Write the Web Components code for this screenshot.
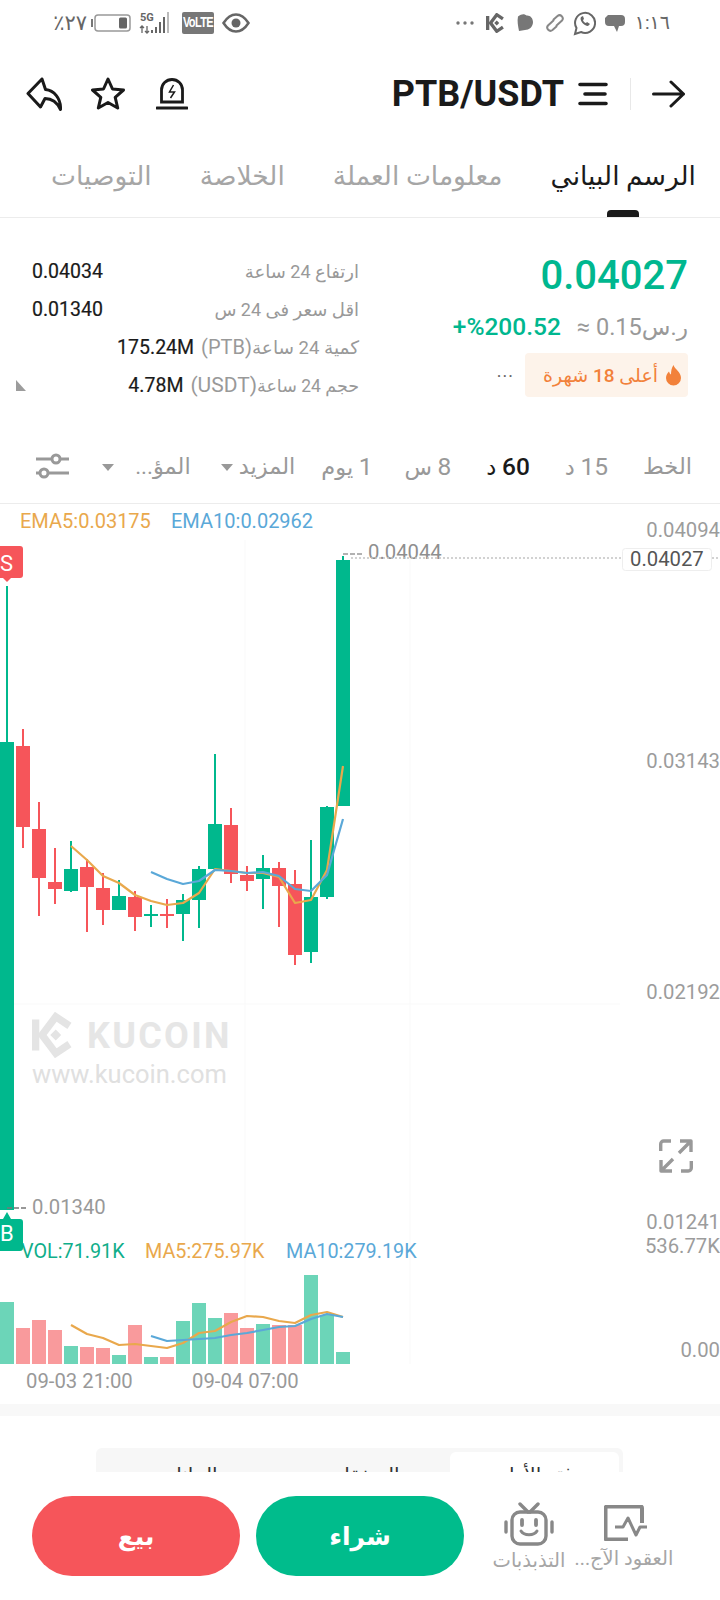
<!DOCTYPE html>
<html lang="ar">
<head>
<meta charset="utf-8">
<title>PTB/USDT</title>
<style>
    html, body { margin: 0; padding: 0; background: #fff; }
    body { width: 720px; height: 1600px; overflow: hidden; font-family: Roboto, "DejaVu Sans", sans-serif; color: #1a1a1a; }
</style>
</head>
<body>
<status-bar></status-bar>
<pair-header pair="PTB/USDT"></pair-header>
<tab-bar></tab-bar>
<ticker-panel></ticker-panel>
<interval-bar></interval-bar>
<kline-chart></kline-chart>
<order-peek></order-peek>
<trade-bar></trade-bar>

<script>
// logo kucoin, dùng cho status bar và watermark
const kcLogo = (color) => `
    <path d="M4 6V40" stroke="${color}" stroke-width="8" fill="none"/>
    <path d="M41 13L26 3 11 23 26 43 41 33" stroke="${color}" stroke-width="8" fill="none"/>
    <path d="M26 17l6 6-6 6-6-6z" fill="${color}"/>`;

class StatusBar extends HTMLElement {
    constructor() {
        super();
        this.attachShadow({ mode: 'open' });
        this.shadowRoot.innerHTML = `
        <style>
            :host { display: flex; justify-content: space-between; align-items: center; height: 45px; padding: 0 50px 0 46px; color: #666; box-sizing: border-box; }
            .side { display: flex; align-items: center; }
            .txt { font-size: 19px; letter-spacing: 1px; }
            svg { display: block; }
            .volte { margin-left: 11px; background: #777; color: #fff; border-radius: 2px; width: 32px; height: 22px; display: flex; align-items: center; justify-content: center; overflow: hidden; }
            .volte span { font: 700 11px/1 'Liberation Sans', sans-serif; letter-spacing: -.6px; transform: scaleY(1.350); }
        </style>
        <div class="side">
            <span class="txt" dir="rtl" style="font-size:21px;width:41px;letter-spacing:2px">٢٧٪</span>
            <svg width="40" height="18" viewBox="0 0 40 18" style="margin-left:4px">
                <rect x="0" y="5" width="2" height="8" fill="#777"/>
                <rect x="4" y="1" width="35" height="16" rx="3" fill="none" stroke="#999" stroke-width="1.5"/>
                <rect x="28" y="3.500" width="8" height="11" rx="1.500" fill="#666"/>
            </svg>
            <svg width="32" height="24" viewBox="0 0 32 24" style="margin-left:8px">
                <text x="1" y="10" font-family="Roboto" font-size="11" font-weight="700" fill="#666">5G</text>
                <path d="M3 22v-7M1 17l2-2 2 2M8 15v7M6 20l2 2 2-2" stroke="#666" stroke-width="1.300" fill="none"/>
                <rect x="12" y="19" width="2" height="3" fill="#666"/>
                <rect x="16" y="16" width="2" height="6" fill="#666"/>
                <rect x="20" y="11" width="2" height="11" fill="#666"/>
                <rect x="24" y="6" width="2" height="16" fill="#666"/>
                <rect x="28" y="1" width="2" height="21" fill="#bbb"/>
            </svg>
            <div class="volte"><span>VoLTE</span></div>
            <svg width="28" height="20" viewBox="0 0 28 20" style="margin-left:8px">
                <path d="M1.500 10C6 3 10 1.500 14 1.500S22 3 26.500 10C22 17 18 18.500 14 18.500S6 17 1.500 10Z" fill="none" stroke="#666" stroke-width="2.500"/>
                <circle cx="14" cy="10" r="4.500" fill="#666"/>
            </svg>
        </div>
        <div class="side">
            <svg width="18" height="4" viewBox="0 0 18 4"><circle cx="2" cy="2" r="1.700" fill="#777"/><circle cx="9" cy="2" r="1.700" fill="#777"/><circle cx="16" cy="2" r="1.700" fill="#777"/></svg>
            <svg width="19" height="20" viewBox="0 0 46 46" style="margin-left:12px">${kcLogo('#666')}</svg>
            <svg width="17" height="19" viewBox="0 0 17 19" style="margin-left:12px"><path d="M1 3.500C5 0 8 1 9.500 2.500 13 2 16 5 16 9c0 5-4 8-8 8l-6 1C1 13 0 8 1 3.500Z" fill="#777"/></svg>
            <svg width="20" height="18" viewBox="0 0 20 18" style="margin-left:11px" fill="none" stroke="#888" stroke-width="2"><path d="M9 6L3 11.500a3.200 3.200 0 0 0 4.500 4.500l4.500-4"/><path d="M11 12l6-5.500A3.200 3.200 0 0 0 12.500 2L8 6"/></svg>
            <svg width="23" height="26" viewBox="0 0 23 26" style="margin-left:8px" fill="none"><path d="M2 24l1.500-6A10 10 0 1 1 8 22Z" stroke="#666" stroke-width="2"/><path d="M8 7c-2 3 3 9 7 9l2-2-3-2-1 1c-1 0-3-2-3-3l1-1-1-3Z" fill="#666"/></svg>
            <svg width="21" height="20" viewBox="0 0 21 20" style="margin-left:8px"><path d="M4 2h13a4 4 0 0 1 4 4v3a4 4 0 0 1-4 4h-2l-2 6-3-6H5a4 4 0 0 1-4-4V5Z" fill="#777"/></svg>
            <span class="txt" style="margin-left:10px" dir="ltr">١:١٦</span>
        </div>`;
    }
}

class PairHeader extends HTMLElement {
    constructor() {
        super();
        this.attachShadow({ mode: 'open' });
        this.shadowRoot.innerHTML = `
        <style>
            :host { display: flex; align-items: center; height: 76px; padding: 21px 35px 0 26px; box-sizing: border-box; }
            svg { display: block; flex: none; }
            .title { font: 700 36px/1 Roboto, sans-serif; color: #1a1a1a; margin-left: auto; }
            .sep { width: 1px; height: 32px; background: #e8e8e8; margin: 0 21px 0 22px; }
        </style>
        <svg width="36" height="34" viewBox="0 0 36 34" fill="none" stroke="#1a1a1a" stroke-width="3" stroke-linejoin="round"><path d="M16 2L2 16.500 14.500 30 19 21.500C25 21.500 31 25 34.500 32.500 35 21 28 13.500 19.500 12.500Z"/></svg>
        <svg width="34" height="33" viewBox="0 0 34 33" fill="none" stroke="#1a1a1a" stroke-width="3" stroke-linejoin="round" style="margin-left:29px"><path d="M17 2l4.500 10 11 1-8.300 7.300 2.500 10.700L17 25.500 7.300 31l2.500-10.700L1.500 13l11-1Z"/></svg>
        <svg width="32" height="33" viewBox="0 0 32 33" fill="none" stroke="#1a1a1a" style="margin-left:31px"><path d="M5.500 25V13a10.500 10.500 0 0 1 21 0V25Z" stroke-width="2.800"/><path d="M17.500 8l-4 7h5l-4 6" stroke-width="1.500"/><path d="M1 31h30" stroke-width="3.200" stroke-linecap="round"/></svg>
        <span class="title">${this.getAttribute('pair')}</span>
        <svg width="30" height="24" viewBox="0 0 30 24" fill="none" stroke="#1a1a1a" stroke-width="3.600" stroke-linecap="round" style="margin-left:14px"><path d="M2 2.500h26M7 12h20M2 21.500h26"/></svg>
        <span class="sep"></span>
        <svg width="33" height="28" viewBox="0 0 33 28" fill="none" stroke="#1a1a1a" stroke-width="3" stroke-linecap="round" stroke-linejoin="round"><path d="M1.500 14h30M19 2l12.500 12L19 26"/></svg>`;
    }
}

class TabBar extends HTMLElement {
    constructor() {
        super();
        this.attachShadow({ mode: 'open' });
        this.shadowRoot.innerHTML = `
        <style>
            :host { display: flex; gap: 48px; height: 97px; padding: 0 24px 0 0; box-sizing: border-box; border-bottom: 1px solid #ececec; font-size: 26.500px; color: #a6a6a6; }
            .tab { position: relative; height: 96px; line-height: 110px; white-space: nowrap; }
            .tab.on { color: #1a1a1a; }
            .tab.on::after { content: ''; position: absolute; left: 56px; bottom: 0; width: 32px; height: 7px; border-radius: 4px 4px 0 0; background: #1a1a1a; }
        </style>`;
        this.setAttribute('dir', 'rtl');
        ['الرسم البياني', 'معلومات العملة', 'الخلاصة', 'التوصيات'].forEach((name, i) => {
            const tab = document.createElement('span');
            tab.className = i === 0 ? 'tab on' : 'tab';
            tab.textContent = name;
            this.shadowRoot.appendChild(tab);
        });
    }
}

class TickerPanel extends HTMLElement {
    constructor() {
        super();
        this.attachShadow({ mode: 'open' });
        this.shadowRoot.innerHTML = `
        <style>
            :host { display: flex; position: relative; justify-content: space-between; height: 215px; padding: 34px 32px 0 32px; box-sizing: border-box; }
            .stats { width: 327px; display: flex; flex-direction: column; gap: 0; }
            .row { display: flex; height: 38px; align-items: center; font-size: 18px; color: #999; }
            .row b { font: 400 19.500px Roboto, sans-serif; color: #1a1a1a; -webkit-text-stroke: .2px #1a1a1a; }
            .row .lbl { margin-left: auto; white-space: nowrap; }
            .row.near b { margin-left: auto; margin-right: 7px; }
            .row.near .lbl { margin-left: 0; font-size: 18.500px; }
            .row.near em { font: 400 20px Roboto, sans-serif; }
            .row.near .lbl.tight { font-size: 17.500px; }
            .row.near .lbl.tight em { font-size: 21px; }
            .tri { position: absolute; left: 16px; top: 162px; border-bottom: 11px solid #9c9c9c; border-left: 10px solid transparent; transform: scaleX(-1); }
            .quote { display: flex; flex-direction: column; align-items: flex-end; }
            .price { font: 500 40px/1 Roboto, sans-serif; color: #00b78f; margin-top: 4px; }
            .chg { display: flex; align-items: center; gap: 16px; margin-top: 16px; font-size: 23.500px; color: #999; }
            .chg b { font: 500 24.500px Roboto, sans-serif; color: #00b78f; }
            .hot { display: flex; align-items: center; gap: 11px; margin-top: 12px; }
            .more { color: #666; font-size: 18px; letter-spacing: 1px; line-height: 1; margin-top: -8px; }
            .badge { display: flex; align-items: center; gap: 7px; height: 44px; padding: 0 6px 0 9px; box-sizing: border-box; width: 163px; background: #fdf3ea; border-radius: 4px; color: #f2813a; font-size: 19px; font-weight: 500; white-space: nowrap; }
        </style>
        <span class="tri"></span>
        <div class="stats">
            <div class="row"><b>0.04034</b><span class="lbl" dir="rtl">ارتفاع 24 ساعة</span></div>
            <div class="row"><b>0.01340</b><span class="lbl" dir="rtl">اقل سعر فى 24 س</span></div>
            <div class="row near"><b>175.24M</b><span class="lbl" dir="rtl">كمية 24 ساعة<em>(PTB)</em></span></div>
            <div class="row near"><b>4.78M</b><span class="lbl tight" dir="rtl">حجم 24 ساعة<em>(USDT)</em></span></div>
        </div>
        <div class="quote">
            <span class="price">0.04027</span>
            <div class="chg"><b dir="ltr">+%200.52</b><span dir="rtl">ر.س0.15 ≈</span></div>
            <div class="hot">
                <span class="more">...</span>
                <div class="badge" dir="rtl">
                    <svg width="17" height="21" viewBox="0 0 17 21"><path d="M8.500 0c1 4 7.500 7 7.500 13a7.500 7.500 0 0 1-15 0c0-3 1.500-5 3-6.500C4.500 8 5 9 6 9.500 6 6 6.500 3 8.500 0Z" fill="#f2813a"/></svg>
                    <span>أعلى 18 شهرة</span>
                </div>
            </div>
        </div>`;
    }
}

class IntervalBar extends HTMLElement {
    constructor() {
        super();
        this.attachShadow({ mode: 'open' });
        this.shadowRoot.innerHTML = `
        <style>
            :host { display: flex; align-items: center; gap: 35px; height: 71px; padding: 0 28px 4px 0; box-sizing: border-box; border-bottom: 1px solid #ececec; font-size: 22.500px; color: #999; }
            span { white-space: nowrap; }
            em { font-style: normal; font-size: 24.500px; }
            .on { color: #1a1a1a; font-weight: 500; }
            .dd { display: flex; align-items: center; gap: 6px; }
            .dd i { border-top: 7px solid #999; border-left: 6.500px solid transparent; border-right: 6.500px solid transparent; margin-top: 3px; }
            svg { display: block; margin-right: -2px; }
        </style>
        <span>الخط</span><span><em>15</em> د</span><span class="on"><em>60</em> د</span><span><em>8</em> س</span><span style="margin-right:-3px"><em>1</em> يوم</span>
        <div class="dd" style="margin-right:-9px"><span>المزيد</span><i></i></div>
        <div class="dd" style="gap:21px;margin-right:-5px"><span>المؤ...</span><i></i></div>
        <svg width="34" height="26" viewBox="0 0 34 26" fill="none" stroke="#999" stroke-width="3"><path d="M1 6h33M1 20h33"/><circle cx="21" cy="6" r="4" fill="#fff"/><circle cx="9" cy="20" r="4" fill="#fff"/></svg>`;
        this.setAttribute('dir', 'rtl');
    }
}

// [x, màu, đỉnh bấc, đỉnh thân, đáy thân, đáy bấc]
const G = '#00b88d', R = '#f6555a';
const candles = [
    [7, G, 586, 742, 1210, 1210], [23, R, 729, 746, 827, 848], [39, R, 802, 829, 878, 916],
    [55, R, 848, 882, 889, 904], [71, G, 841, 869, 891, 892], [87, R, 859, 867, 887, 932],
    [103, R, 873, 888, 910, 925], [119, G, 880, 896, 910, 910], [135, R, 891, 897, 917, 931],
    [151, G, 905, 914, 916, 927], [167, R, 899, 914, 916, 928], [183, G, 894, 900, 914, 941],
    [199, G, 866, 869, 900, 928], [215, G, 754, 824, 869, 869], [231, R, 808, 825, 874, 883],
    [247, R, 866, 875, 881, 891], [263, G, 855, 868, 879, 909], [279, R, 862, 868, 886, 927],
    [295, R, 870, 884, 955, 965], [311, G, 840, 897, 952, 963], [327, G, 806, 807, 897, 899],
    [343, G, 556, 560, 806, 806]
];
const vols = [1302, 1328, 1320, 1330, 1346, 1347, 1348, 1355, 1325, 1357, 1357, 1321, 1303, 1318, 1313, 1328, 1324, 1325, 1325, 1275, 1315, 1352];
const ema5 = [846, 860, 876, 883, 895, 901, 905, 903, 893, 869, 871, 873, 873, 877, 903, 900, 870, 766];
const ema10 = [872, 879, 884, 881, 870, 871, 873, 872, 876, 889, 891, 875, 819];
const ma5 = [1325, 1334, 1338, 1345, 1344, 1346, 1348, 1343, 1333, 1331, 1322, 1316, 1317, 1321, 1323, 1315, 1312, 1317];
const ma10 = [1336, 1341, 1340, 1339, 1338, 1335, 1333, 1330, 1327, 1326, 1319, 1314, 1317];

const line = (ys, startX, color) =>
    `<polyline points="${ys.map((y, i) => (startX + i * 16) + ',' + y).join(' ')}" fill="none" stroke="${color}" stroke-width="2.200" stroke-linejoin="round"/>`;

class KlineChart extends HTMLElement {
    constructor() {
        super();
        this.attachShadow({ mode: 'open' });
        const wicks = candles.map(c => `<rect x="${c[0] - 1}" y="${c[2]}" width="2" height="${c[5] - c[2]}" fill="${c[1]}"/>`).join('');
        const bodies = candles.map(c => `<rect x="${c[0] - 7}" y="${c[3]}" width="14" height="${c[4] - c[3]}" fill="${c[1]}"/>`).join('');
        const volBars = vols.map((y, i) => {
            const c = candles[i];
            return `<rect x="${c[0] - 7}" y="${y}" width="14" height="${1364 - y}" fill="${c[1] === G ? '#6cd5b8' : '#f99a9c'}"/>`;
        }).join('');
        const axis = [[529, '0.04094'], [760, '0.03143'], [991, '0.02192'], [1221, '0.01241'], [1245, '536.77K'], [1349, '0.00']]
            .map(a => `<text x="720" y="${a[0] + 8}" text-anchor="end" fill="#9c9c9c">${a[1]}</text>`).join('');
        this.shadowRoot.innerHTML = `
        <style>
            :host { display: block; height: 900px; }
            svg { display: block; font-family: Roboto, sans-serif; font-size: 20.300px; }
        </style>
        <svg width="720" height="900" viewBox="0 504 720 900">
            <g stroke="#f9f9f9" stroke-width="1">
                <path d="M245 540V1364M410 540V1364M0 1004H620"/>
            </g>
            <g>
                <svg x="32" y="1012" width="42" height="46" viewBox="0 0 46 46">${kcLogo('#e4e4e4')}</svg>
                <text x="87" y="1048" font-size="36" font-weight="700" letter-spacing="2.300" fill="#e6e6e6">KUCOIN</text>
                <text x="32" y="1083" font-size="25.500" fill="#e0e0e0">www.kucoin.com</text>
            </g>
            <text x="20" y="528" font-size="20" fill="#e9a84c">EMA5:0.03175</text>
            <text x="171" y="528" font-size="20" fill="#5aa8d8">EMA10:0.02962</text>
            ${wicks}${bodies}
            ${line(ema5, 71, '#e9a84c')}
            ${line(ema10, 151, '#5aa8d8')}
            <path d="M343 554H362" stroke="#999" stroke-width="1.500" stroke-dasharray="5 2"/>
            <text x="368" y="559" fill="#8f8f8f">0.04044</text>
            <path d="M351 558H622M712 558H720" stroke="#c4c4c4" stroke-width="1.500" stroke-dasharray="2 2"/>
            <rect x="622.500" y="548.500" width="89" height="22" rx="3" fill="#fff" stroke="#eee"/>
            <text x="630" y="566" fill="#555">0.04027</text>
            ${axis}
            <path d="M0 546H20a3 3 0 0 1 3 3V575a3 3 0 0 1-3 3H11L7 582 3 578H0Z" fill="#f6555a"/>
            <text x="0" y="571" font-size="22" fill="#fff">S</text>
            <path d="M7 1212 3 1219H0V1251H20a3 3 0 0 0 3-3V1222a3 3 0 0 0-3-3H11Z" fill="#00b88d"/>
            <text x="0" y="1241" font-size="22" fill="#fff">B</text>
            <path d="M7 1208H26" stroke="#777" stroke-width="1.500" stroke-dasharray="5 2"/>
            <text x="32" y="1214" fill="#999">0.01340</text>
            <g font-size="19.800">
                <text x="21" y="1258" fill="#10ae8a">VOL:71.91K</text>
                <text x="145" y="1258" fill="#e9a84c">MA5:275.97K</text>
                <text x="286" y="1258" fill="#5aa8d8">MA10:279.19K</text>
            </g>
            ${volBars}
            ${line(ma5, 71, '#e9a84c')}
            ${line(ma10, 151, '#5aa8d8')}
            <text x="26" y="1388" fill="#999">09-03 21:00</text>
            <text x="192" y="1388" fill="#999">09-04 07:00</text>
            <svg x="659" y="1139" width="34" height="34" viewBox="0 0 34 34" fill="none" stroke="#999" stroke-width="3.400" stroke-linejoin="round">
                <path d="M1.700 12V5a3 3 0 0 1 3-3H12"/>
                <path d="M21 2h11v11M32 2L20 14"/>
                <path d="M2 21v11h11M2 32l12-12"/>
                <path d="M32.300 22v7a3 3 0 0 1-3 3H22"/>
            </svg>
        </svg>`;
    }
}

class OrderPeek extends HTMLElement {
    constructor() {
        super();
        this.attachShadow({ mode: 'open' });
        this.shadowRoot.innerHTML = `
        <style>
            :host { display: block; height: 68px; overflow: hidden; box-sizing: border-box; border-top: 12px solid #f8f8f8; padding: 32px 97px 0 96px; }
            .seg { display: flex; height: 60px; background: #f7f7f7; border-radius: 6px; padding: 4px 4px 0; box-sizing: border-box; font-size: 20px; color: #333; direction: rtl; }
            .seg span { flex: 1; padding-top: 10px; text-align: center; border-radius: 6px; line-height: 26px; white-space: nowrap; }
            .seg .on { flex: 0 0 169px; background: #fff; }
        </style>
        <div class="seg"><span class="on">دفتر الأوامر</span><span>الصفقات</span><span>البيانات</span></div>`;
    }
}

class TradeBar extends HTMLElement {
    constructor() {
        super();
        this.attachShadow({ mode: 'open' });
        this.shadowRoot.innerHTML = `
        <style>
            :host { display: flex; align-items: flex-start; height: 128px; padding: 24px 0 0 32px; box-sizing: border-box; background: #fff; }
            .btn { width: 208px; height: 80px; border-radius: 40px; color: #fff; font-size: 25px; font-weight: 700; display: flex; align-items: center; justify-content: center; }
            .sell { background: #f6555a; }
            .buy { background: #00bc8c; margin-left: 16px; }
            .act { display: flex; flex-direction: column; align-items: center; font-size: 19.500px; color: #a6a6a6; white-space: nowrap; }
            svg { display: block; }
        </style>
        <div class="btn sell">بيع</div>
        <div class="btn buy">شراء</div>
        <div class="act" style="width:74px;margin-left:28px">
            <svg width="50" height="44" viewBox="0 0 50 44" fill="none" stroke="#888" stroke-width="3.400" stroke-linecap="round" style="margin-top:6px"><rect x="8" y="10" width="34" height="32" rx="8"/><path d="M16 2l8 8M34 2l-8 8M2 20v10M48 20v10"/><path d="M18 18v5M32 18v5" stroke-width="3.800"/><path d="M17 29c3 5 13 5 16 0" stroke-width="3"/></svg>
            <span style="margin-top:3px" dir="rtl">التذبذبات</span>
        </div>
        <div class="act" style="width:94px;margin-left:11px">
            <svg width="44" height="36" viewBox="0 0 44 36" fill="none" stroke="#888" stroke-width="4" style="margin:9px 0 0 4px"><path d="M38 18V3a1.500 1.500 0 0 0-1.500-1.500H3A1.500 1.500 0 0 0 1.500 3V33A1.500 1.500 0 0 0 3 34.500H24"/><path d="M11 22h8l5-9 8 17 4-8h7" stroke-width="3" stroke-linejoin="round"/></svg>
            <span style="margin-top:6px" dir="rtl">العقود الآج...</span>
        </div>`;
    }
}

customElements.define('status-bar', StatusBar);
customElements.define('pair-header', PairHeader);
customElements.define('tab-bar', TabBar);
customElements.define('ticker-panel', TickerPanel);
customElements.define('interval-bar', IntervalBar);
customElements.define('kline-chart', KlineChart);
customElements.define('order-peek', OrderPeek);
customElements.define('trade-bar', TradeBar);
</script>
</body>
</html>
